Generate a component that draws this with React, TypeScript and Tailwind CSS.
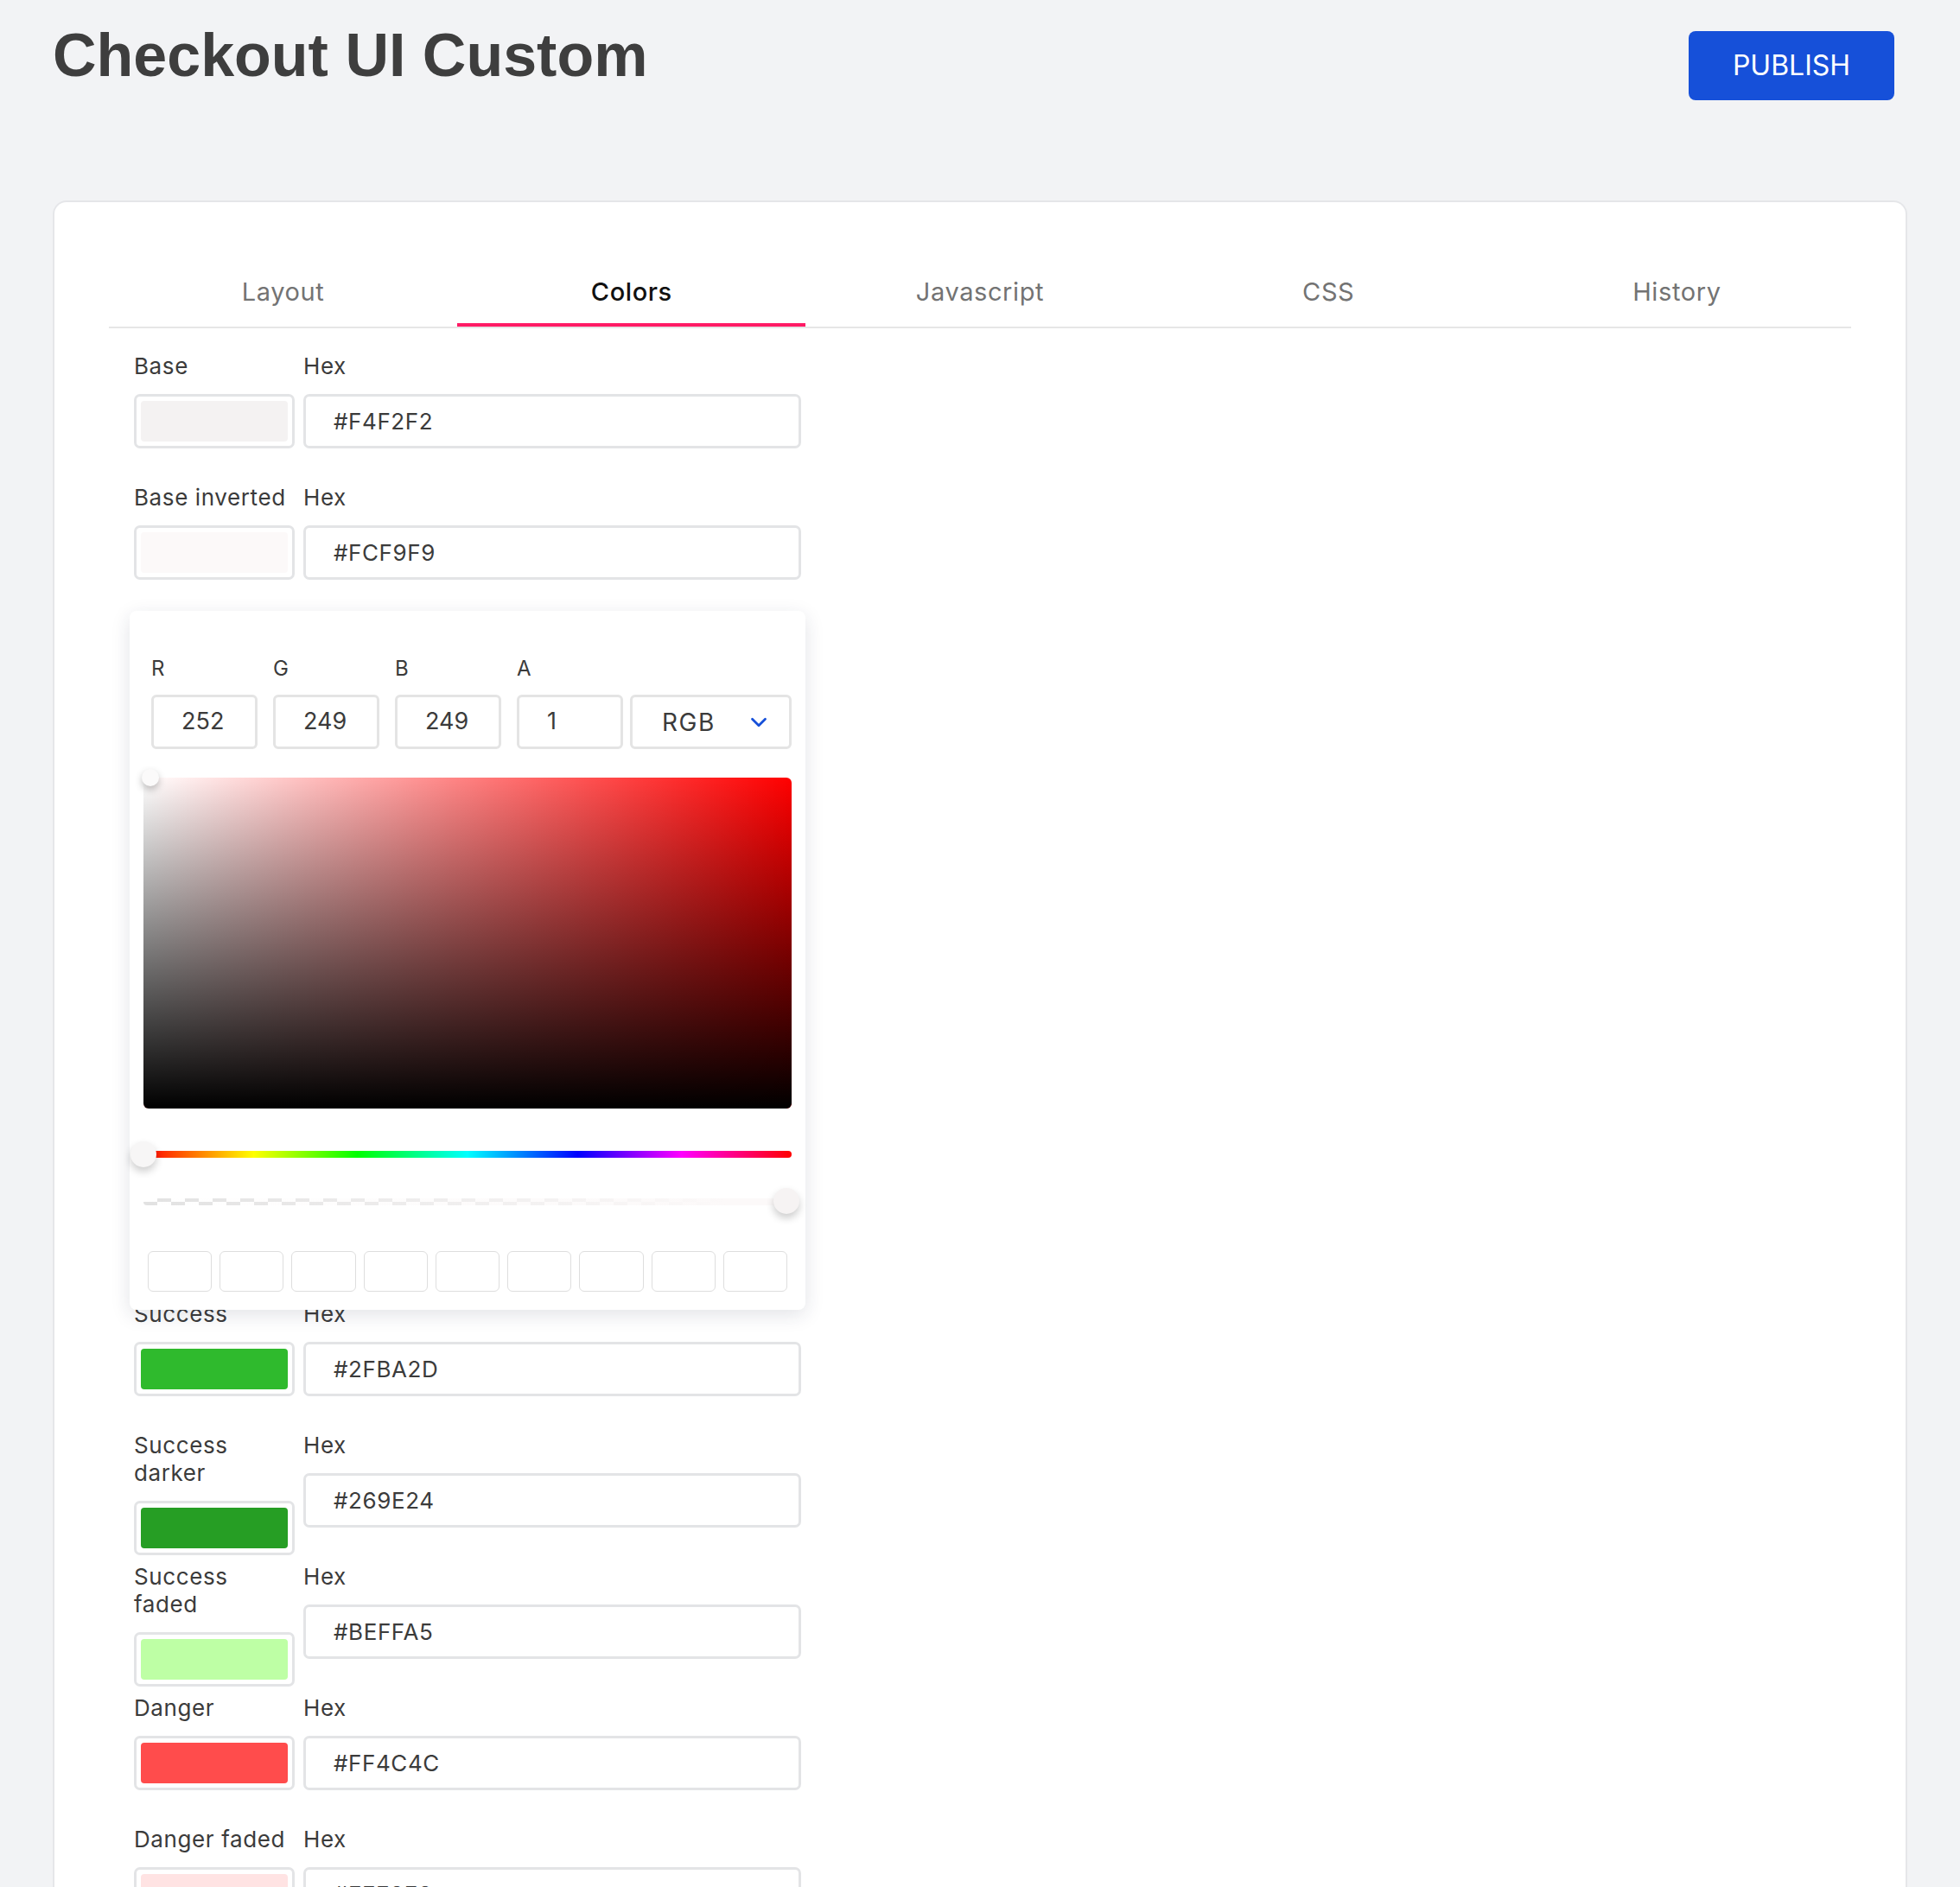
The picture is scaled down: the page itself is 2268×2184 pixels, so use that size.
import { ChevronDown } from 'lucide-react';

const TABS = ['Layout', 'Colors', 'Javascript', 'CSS', 'History'];

const TOP_ROWS = [
  { label: 'Base', hex: '#F4F2F2' },
  { label: 'Base inverted', hex: '#FCF9F9' },
];

const BOTTOM_ROWS = [
  { label: 'Success', hex: '#2FBA2D' },
  { label: 'Success\ndarker', hex: '#269E24' },
  { label: 'Success\nfaded', hex: '#BEFFA5' },
  { label: 'Danger', hex: '#FF4C4C' },
  { label: 'Danger faded', hex: '#FFE3E3' },
  { label: 'Warning', hex: '#FFB020' },
];

const RGBA = [
  { label: 'R', value: '252' },
  { label: 'G', value: '249' },
  { label: 'B', value: '249' },
  { label: 'A', value: '1' },
];

function ColorRow({ label, hex }: { label: string; hex: string }) {
  return (
    <div className="grid h-[152px] grid-cols-[186px_576px] gap-x-[10px] text-[#3b3b3b]">
      <div>
        <div className="whitespace-pre-line text-[26px] leading-[32px] tracking-[0.6px]">{label}</div>
        <div className="mt-[16px] h-[63px] w-[186px] rounded-[7px] border-[3px] border-[#e3e4e6] bg-white p-[5px]">
          <div className="h-full w-full rounded-[4px]" style={{ backgroundColor: hex }} />
        </div>
      </div>
      <div>
        <div className="text-[26px] leading-[32px] tracking-[0.6px]">Hex</div>
        <div className="mt-[16px] flex h-[63px] items-center rounded-[7px] border-[3px] border-[#e3e4e6] bg-white pl-[32px] text-[26px] tracking-[0.6px]">
          {hex}
        </div>
      </div>
    </div>
  );
}

function ColorPicker() {
  return (
    <div className="absolute left-[-5px] top-[299px] z-10 h-[809px] w-[782px] rounded-[8px] bg-white px-[16px] pt-[51px] shadow-[0_6px_22px_rgba(30,40,70,0.13)]">
      <div className="flex items-end pl-[9px] text-[#3b3b3b]">
        <div className="flex gap-[18px]">
          {RGBA.map((item) => (
            <div key={item.label} className="w-[123px]">
              <div className="text-[24px] leading-[32px]">{item.label}</div>
              <div className="mt-[14px] flex h-[63px] items-center rounded-[6px] border-[3px] border-[#e4e4e4] pl-[32px] text-[27px]">
                {item.value}
              </div>
            </div>
          ))}
        </div>
        <div className="ml-[8px] flex h-[63px] flex-1 items-center justify-between rounded-[6px] border-[3px] border-[#e4e4e4] pl-[34px] pr-[20px] text-[28px] tracking-[1.5px]">
          <span>RGB</span>
          <ChevronDown size={30} strokeWidth={2.2} className="text-[#1650d9]" />
        </div>
      </div>

      {/* saturation / value area */}
      <div className="relative mt-[33px] h-[383px] rounded-[6px] bg-[#ff0000]">
        <div className="h-full w-full rounded-[6px] bg-[linear-gradient(to_right,#ffffff,rgba(255,255,255,0))]">
          <div className="h-full w-full rounded-[6px] bg-[linear-gradient(to_top,#000000,rgba(0,0,0,0))]" />
        </div>
        <div className="absolute left-[-2px] top-[-10px] h-[20px] w-[20px] rounded-full bg-[#fbfafa] shadow-[0_4px_8px_rgba(0,0,0,0.25)]" />
      </div>

      {/* hue */}
      <div className="relative mt-[37px] flex h-[32px] items-center">
        <div className="h-[8px] w-full rounded-full bg-[linear-gradient(to_right,#ff0000_0%,#ffff00_17%,#00ff00_33%,#00ffff_50%,#0000ff_67%,#ff00ff_83%,#ff0000_100%)]" />
        <div className="absolute left-[-15px] top-[1px] h-[30px] w-[30px] rounded-full bg-[#f7f6f6] shadow-[0_5px_10px_rgba(0,0,0,0.2)]" />
      </div>

      {/* alpha */}
      <div className="relative mt-[23px] flex h-[32px] items-center">
        <div className="h-[8px] w-full rounded-full bg-[conic-gradient(#e2e2e2_25%,#ffffff_0_50%,#e2e2e2_0_75%,#ffffff_0)] bg-[length:32px_8px]">
          <div className="h-full w-full rounded-full bg-[linear-gradient(to_right,rgba(252,249,249,0),#fcf9f9_90%)]" />
        </div>
        <div className="absolute right-[-9px] top-[0px] h-[30px] w-[30px] rounded-full bg-[#f6f3f3] shadow-[0_5px_10px_rgba(0,0,0,0.2)]" />
      </div>

      {/* preset swatches */}
      <div className="mt-[41px] flex gap-[9px] px-[5px]">
        {Array.from({ length: 9 }).map((_, i) => (
          <div key={i} className="h-[47px] flex-1 rounded-[6px] border border-[#dedede] bg-white" />
        ))}
      </div>
    </div>
  );
}

export default function App() {
  return (
    <div className="min-h-screen bg-[#f2f3f5] px-[61px] font-['Inter','Noto_Sans',sans-serif]">
      <div className="flex h-[232px] items-start justify-between">
        <h1 className="mt-[29px] font-['Liberation_Sans',Arial,sans-serif] text-[70px] font-bold leading-[70px] text-[#3e3e3e]">
          Checkout UI Custom
        </h1>
        <button
          type="button"
          className="mr-[15px] mt-[36px] h-[80px] w-[238px] rounded-[8px] bg-[#1650d9] text-[32px] text-white"
        >
          PUBLISH
        </button>
      </div>

      <div className="rounded-t-[16px] border-2 border-b-0 border-[#e5e6e9] bg-white px-[63px] pb-[80px] pt-[64px]">
        <div className="grid grid-cols-5 border-b-2 border-[#e6e6e6]">
          {TABS.map((tab) => {
            const active = tab === 'Colors';
            return (
              <button
                key={tab}
                type="button"
                className={
                  active
                    ? 'border-b-4 border-[#ff1a65] pb-[16px] pt-[20px] text-[29px] font-medium leading-[40px] tracking-[0.6px] text-[#111111]'
                    : 'border-b-4 border-transparent pb-[16px] pt-[20px] text-[29px] leading-[40px] tracking-[0.6px] text-[#737373]'
                }
              >
                {tab}
              </button>
            );
          })}
        </div>

        <div className="relative mt-[28px] pl-[29px]">
          {TOP_ROWS.map((row) => (
            <ColorRow key={row.label} label={row.label} hex={row.hex} />
          ))}
          <div className="h-[793px]" />
          {BOTTOM_ROWS.map((row) => (
            <ColorRow key={row.label} label={row.label} hex={row.hex} />
          ))}
          <div className="absolute left-[29px] top-0">
            <div className="relative">
              <ColorPicker />
            </div>
          </div>
        </div>
      </div>
    </div>
  );
}
